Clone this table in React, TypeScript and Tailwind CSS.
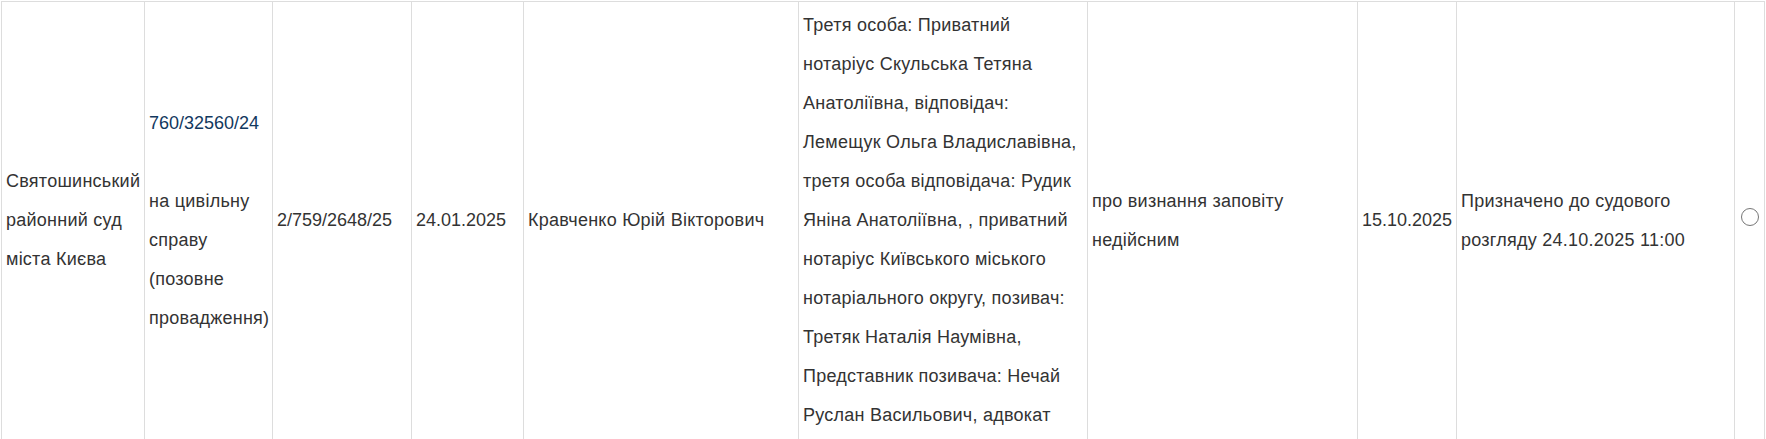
export default function App() {
  const cell =
    "flex items-center border-r border-b border-[#dddddd] px-1 py-1 text-[18px] leading-[39px] text-[#333333] whitespace-nowrap";

  const parties = [
    "Третя особа: Приватний",
    "нотаріус Скульська Тетяна",
    "Анатоліївна, відповідач:",
    "Лемещук Ольга Владиславівна,",
    "третя особа відповідача: Рудик",
    "Яніна Анатоліївна, , приватний",
    "нотаріус Київського міського",
    "нотаріального округу, позивач:",
    "Третяк Наталія Наумівна,",
    "Представник позивача: Нечай",
    "Руслан Васильович, адвокат",
  ];

  return (
    <div className="w-full h-[439px] overflow-hidden bg-white pl-px pt-px font-['Liberation_Sans',Arial,sans-serif]">
      <div className="grid grid-cols-[143px_128px_139px_112px_275px_289px_270px_99px_278px_30px] border-l border-t border-[#dddddd] w-max">
        <div className={cell}>
          <div className="tracking-[0.25px]">
            Святошинський
            <br />
            районний суд
            <br />
            міста Києва
          </div>
        </div>
        <div className={cell}>
          <div>
            <a href="#" className="text-[#12385e]">
              760/32560/24
            </a>
            <br />
            <br />
            <span className="tracking-[0.25px]">
              на цивільну
              <br />
              справу
              <br />
              (позовне
              <br />
              провадження)
            </span>
          </div>
        </div>
        <div className={cell}>
          <div>2/759/2648/25</div>
        </div>
        <div className={cell}>
          <div>24.01.2025</div>
        </div>
        <div className={cell}>
          <div className="tracking-[0.25px]">Кравченко Юрій Вікторович</div>
        </div>
        <div className={cell}>
          <div className="tracking-[0.25px]">
            {parties.map((line) => (
              <div key={line}>{line}</div>
            ))}
          </div>
        </div>
        <div className={cell}>
          <div className="tracking-[0.25px]">
            про визнання заповіту
            <br />
            недійсним
          </div>
        </div>
        <div className={cell}>
          <div>15.10.2025</div>
        </div>
        <div className={cell}>
          <div className="tracking-[0.25px]">
            Призначено до судового
            <br />
            розгляду 24.10.2025 11:00
          </div>
        </div>
        <div className="flex items-center justify-center border-r border-b border-[#dddddd]">
          <span className="block w-[18px] h-[18px] -mt-[7px] rounded-full border border-[#767676] bg-white" />
        </div>
      </div>
    </div>
  );
}
